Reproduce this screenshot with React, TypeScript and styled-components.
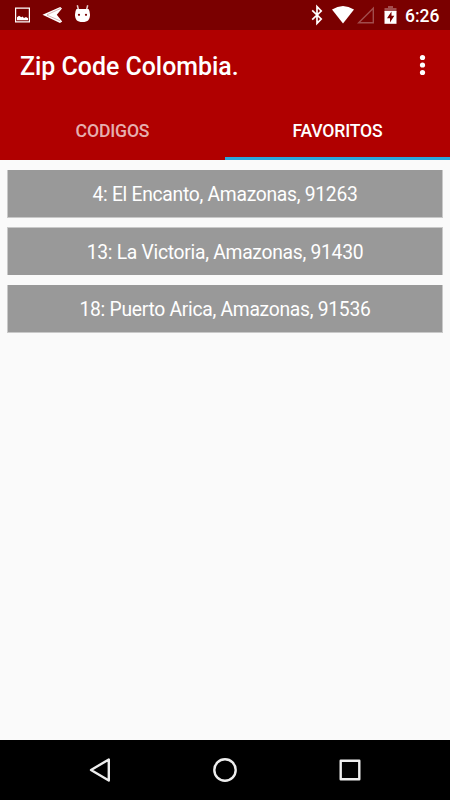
import React from "react";
import styled, { createGlobalStyle } from "styled-components";

const Global = createGlobalStyle`
  *, *::before, *::after { box-sizing: border-box; }
  body { margin: 0; background: #fafafa; }
`;

const Screen = styled.div`
  width: 450px;
  height: 800px;
  display: flex;
  flex-direction: column;
  overflow: hidden;
  background: #fafafa;
  color: #fff;
  font-family: Roboto, "Liberation Sans", sans-serif;
`;

const StatusBar = styled.div`
  height: 30px;
  flex: none;
  display: flex;
  justify-content: space-between;
  background: #7a0000;
`;

const StatusIcons = styled.svg`
  display: block;
  height: 30px;
`;

const StatusRight = styled.div`
  display: flex;
  align-items: center;
  padding-right: 10px;
`;

const Clock = styled.time`
  width: 35px;
  padding-top: 1px;
  font-size: 17.5px;
  font-weight: 500;
  line-height: 30px;
  white-space: nowrap;
`;

const Toolbar = styled.header`
  height: 70px;
  flex: none;
  display: flex;
  align-items: center;
  justify-content: space-between;
  padding: 2px 20px 0;
  background: #b00000;
`;

const Title = styled.h1`
  margin: 2px 0 0;
  font-size: 24.9px;
  font-weight: 500;
  line-height: 30px;
  white-space: nowrap;
`;

const MenuButton = styled.button`
  display: flex;
  padding: 0;
  margin-bottom: 2px;
  border: 0;
  background: none;
`;

const Tabs = styled.nav`
  height: 60px;
  flex: none;
  display: grid;
  grid-template-columns: 1fr 1fr;
  background: #b00000;
`;

const Tab = styled.button<{ $active?: boolean }>`
  padding: 5px 0 0;
  border: 0;
  border-bottom: 3px solid ${(p) => (p.$active ? "#2ba8dc" : "transparent")};
  background: none;
  color: ${(p) => (p.$active ? "#fff" : "rgba(255, 255, 255, 0.7)")};
  font: 500 17.6px/24px Roboto, sans-serif;
  letter-spacing: -0.15px;
`;

const List = styled.main`
  flex: 1;
  display: flex;
  flex-direction: column;
  padding: 10px 7px;
`;

const Item = styled.div<{ $softEdge: "top" | "bottom" }>`
  height: 48px;
  flex: none;
  margin-bottom: ${(p) => (p.$softEdge === "top" ? "10px" : "9px")};
  border: 0 solid #c9c9c9;
  border-width: ${(p) => (p.$softEdge === "top" ? "1px 1px 0" : "0 1px 1px")};
  background: #999;
  font-size: 19.3px;
  letter-spacing: -0.28px;
  line-height: 49px;
  text-align: center;
  white-space: nowrap;
`;

const NavBar = styled.footer`
  height: 60px;
  flex: none;
  display: flex;
  justify-content: center;
  background: #000;
`;

const NavButton = styled.button`
  width: 125px;
  padding: 0;
  border: 0;
  background: none;
  display: flex;
  align-items: center;
  justify-content: center;
`;

const NavIcon = styled.svg`
  width: 30px;
  height: 30px;
  fill: none;
  stroke: #eee;
  stroke-width: 2.4;
  stroke-linejoin: round;
`;

const favorites = [
  "4: El Encanto, Amazonas, 91263",
  "13: La Victoria, Amazonas, 91430",
  "18: Puerto Arica, Amazonas, 91536",
];

const Notifications = () => (
  <StatusIcons width="110" viewBox="0 0 110 30" fill="#fff">
    <path fillRule="evenodd" d="M15 7.5h15v15H15zM16.2 8.7v12.6h12.6V8.7z" />
    <path d="M17 20.2v-3l2-1.500 2.300 1.500 1.200-.7 1.500 1.400 2-1 2 1.300v2z" />
    <path d="M42.500 14.800 60.200 7l1.800 1.400-5.200 6.400 5.400 6.600L60 23z" />
    <path d="M47 14.800 60.500 8.500M47 15.100l13.500 5.900" stroke="#7a0000" strokeWidth=".3" />
    <path d="M76.500 9h12q1.500 2 1.500 5.500c0 5-2 7.500-7.500 7.500S75 19.500 75 14.500Q75 11 76.500 9z" />
    <path d="m77.300 5.300 1.200 4.700m9.200-4.700-1.200 4.700" stroke="#fff" strokeOpacity=".8" strokeWidth="1.500" />
    <circle cx="79" cy="14.800" r="1.100" fill="#7a0000" />
    <circle cx="86" cy="14.800" r="1.100" fill="#7a0000" />
  </StatusIcons>
);

const SystemIcons = () => (
  <StatusIcons width="105" viewBox="300 0 105 30" fill="#fff">
    <path d="m312.200 10.300 9 8.700-4.200 4.300V6.700l4.200 4.300-9 8.700" fill="none" stroke="#fff" strokeWidth="1.700" />
    <path d="M332 9.500q11-7.200 22 0L343 23.500z" />
    <path d="M358.700 22.700 373.300 8.200v14.500z" fill="none" stroke="#a14c4c" strokeWidth="1.400" />
    <path d="M384.500 8h3.500V6h5v2h3.500v4h-12z" fill="#a34d4d" />
    <path d="M384.500 11h12v12.800h-12z" />
    <path d="m391.500 11.500-4.500 6.700h3v4.300l4.300-6.700h-2.800z" fill="#7a0000" />
  </StatusIcons>
);

export default function App() {
  return (
    <>
      <Global />
      <Screen>
        <StatusBar>
          <Notifications />
          <StatusRight>
            <SystemIcons />
            <Clock>6:26</Clock>
          </StatusRight>
        </StatusBar>
        <Toolbar>
          <Title>Zip Code Colombia.</Title>
          <MenuButton aria-label="Menu">
            <svg width="15" height="24" fill="#fff">
              <circle cx="7.500" cy="4.500" r="2.600" />
              <circle cx="7.500" cy="12" r="2.600" />
              <circle cx="7.500" cy="19.500" r="2.600" />
            </svg>
          </MenuButton>
        </Toolbar>
        <Tabs>
          <Tab>CODIGOS</Tab>
          <Tab $active>FAVORITOS</Tab>
        </Tabs>
        <List>
          {favorites.map((text, i) => (
            <Item key={text} $softEdge={i % 2 ? "top" : "bottom"}>{text}</Item>
          ))}
        </List>
        <NavBar>
          <NavButton aria-label="Back">
            <NavIcon><path d="M6 15 23.800 4.500v21z" /></NavIcon>
          </NavButton>
          <NavButton aria-label="Home">
            <NavIcon><circle cx="15" cy="15" r="10.700" /></NavIcon>
          </NavButton>
          <NavButton aria-label="Recent apps">
            <NavIcon><rect x="5.700" y="5.700" width="18.600" height="18.600" /></NavIcon>
          </NavButton>
        </NavBar>
      </Screen>
    </>
  );
}
